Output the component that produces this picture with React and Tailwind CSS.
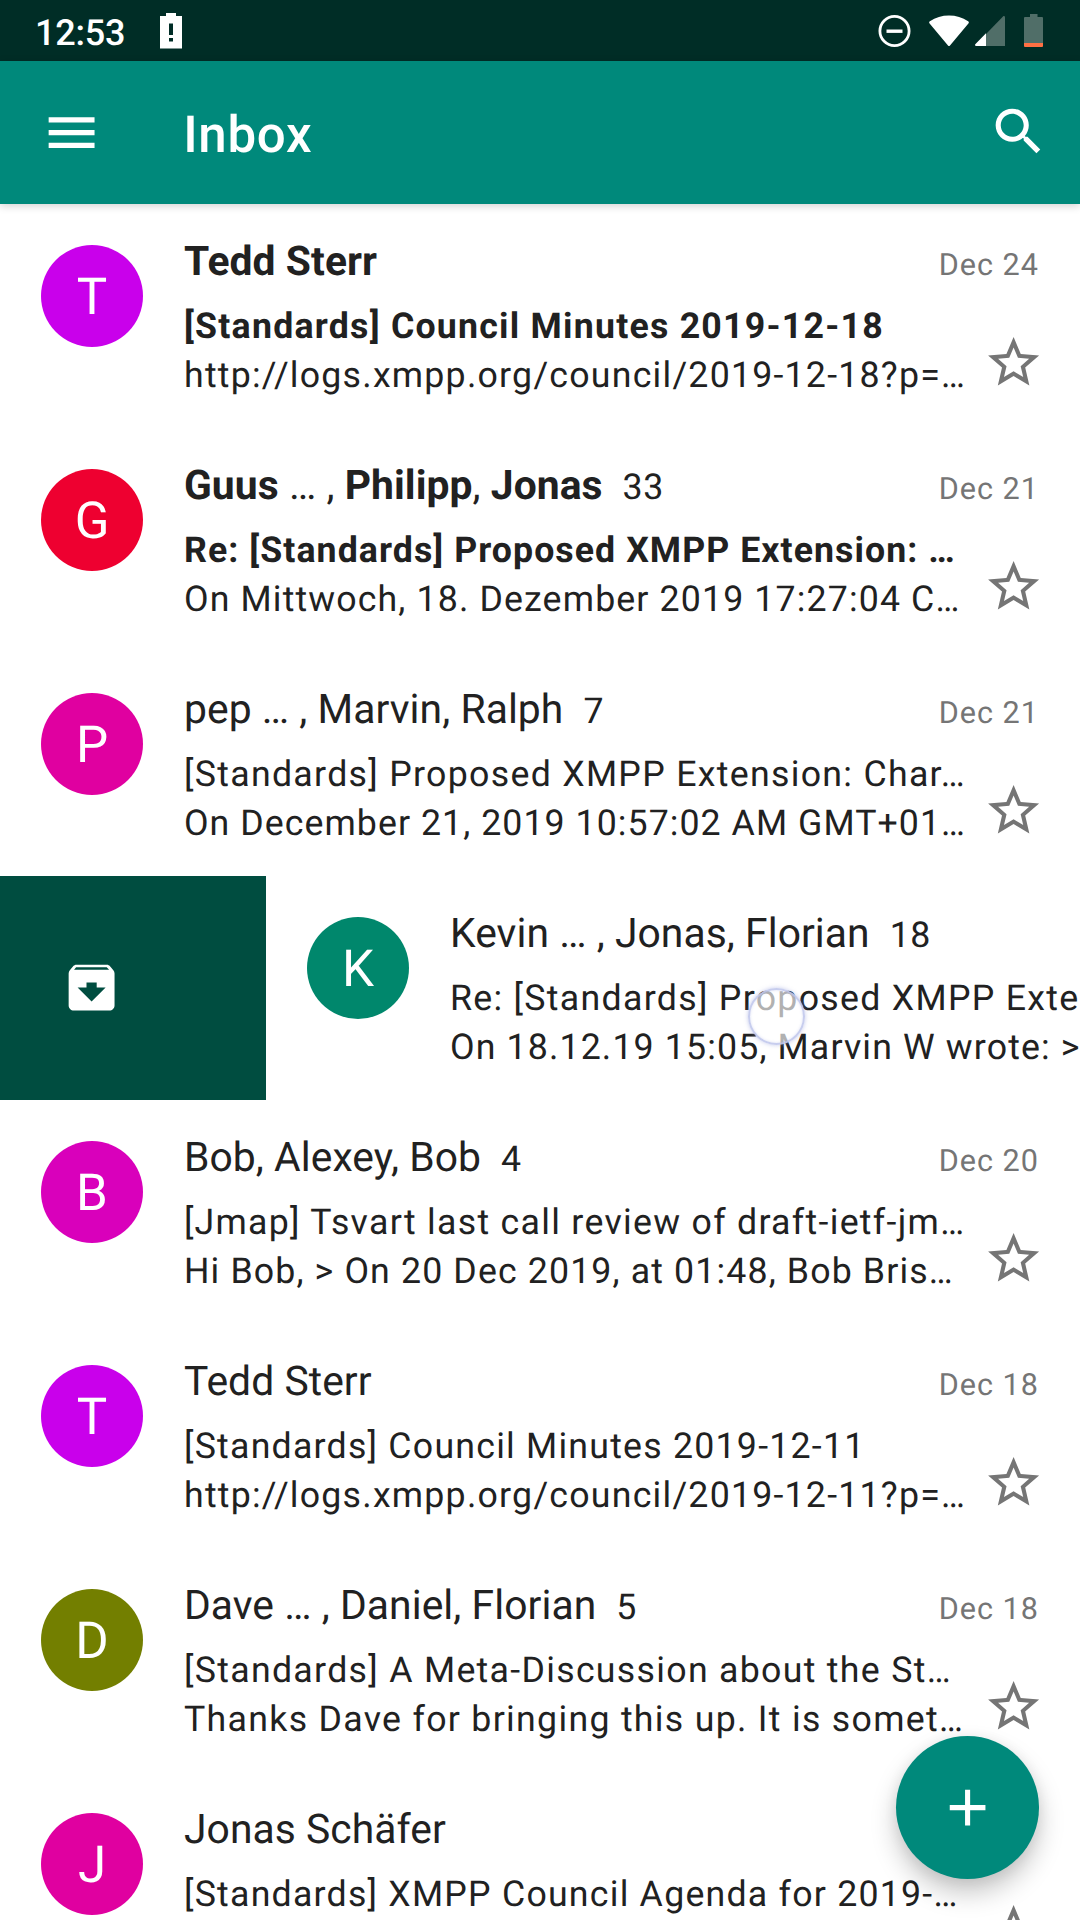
const MENU = 'M3 18h18v-2H3v2zm0-5h18v-2H3v2zm0-7v2h18V6H3z';
const SEARCH =
  'M15.5 14h-.79l-.28-.27C15.41 12.59 16 11.11 16 9.5 16 5.91 13.09 3 9.5 3S3 5.91 3 9.5 5.91 16 9.5 16c1.61 0 3.09-.59 4.23-1.57l.27.28v.79l5 4.99L20.49 19l-4.99-5zm-6 0C7.01 14 5 11.99 5 9.5S7.01 5 9.5 5 14 7.01 14 9.5 11.99 14 9.5 14z';
const STAR =
  'M22 9.24l-7.19-.62L12 2 9.19 8.63 2 9.24l5.46 4.73L5.82 21 12 17.27 18.18 21l-1.63-7.03L22 9.24zM12 15.4l-3.76 2.27 1-4.28-3.32-2.88 4.38-.38L12 6.1l1.71 4.04 4.38.38-3.32 2.88 1 4.28L12 15.4z';
const ARCHIVE =
  'M20.54 5.23l-1.39-1.68C18.88 3.21 18.47 3 18 3H6c-.47 0-.88.21-1.16.55L3.46 5.23C3.17 5.57 3 6.02 3 6.5V19c0 1.1.9 2 2 2h14c1.1 0 2-.9 2-2V6.5c0-.48-.17-.93-.46-1.27zM12 17.5L6.5 12H10v-2h4v2h3.5L12 17.5zM5.12 5l.81-1h12l.94 1H5.12z';
const PLUS = 'M19 13h-6v6h-2v-6H5v-2h6V5h2v6h6v2z';

function Icon({ d, className = '' }) {
  return (
    <svg viewBox="0 0 24 24" fill="currentColor" className={`size-[61.2px] shrink-0 ${className}`}>
      <path d={d} />
    </svg>
  );
}

function StatusBar() {
  return (
    <header className="flex h-[61px] items-center bg-[#002d26] pl-[35px] pr-[37px] text-white">
      <span className="mt-[4px] w-[125px] text-[36px] leading-[56px] font-medium tracking-[-0.2px]">
        12:53
      </span>
      <svg width="22" height="36" viewBox="0 0 22 36" className="shrink-0">
        <path
          fill="#fff"
          fillRule="evenodd"
          d="M6 0h10v3h6v32.500H0V3h6zM9 10.500v11.500h4V10.500zM9 25v3.500h4V25z"
        />
      </svg>
      <div className="ml-auto flex items-center">
        <svg width="34" height="34" viewBox="0 0 34 34" fill="none" stroke="#fff">
          <circle cx="17.500" cy="17" r="14.6" strokeWidth="2.8" />
          <path d="M9.500 17.200h16" strokeWidth="3.400" />
        </svg>
        <svg width="40" height="32" viewBox="0 0 40 32" className="ml-[18px]">
          <path
            fill="#fff"
            d="M.6 8.600C-.1 7.800 0 6.800.9 6.200 6.500 2.500 13 .5 20 .5s13.500 2 19.100 5.700c.9.600 1 1.600.3 2.400L21 30.400c-.6.700-1.400.7-2 0z"
          />
        </svg>
        <svg width="30" height="30" viewBox="0 0 30 30" className="ml-[6px]">
          <path fill="#506e68" d="M30 1.500V30H11V18L28 .5c1-1 2-.3 2 1z" />
          <path fill="#fff" d="M11 17.200V30H1.300C0 30-.5 29 .5 28z" />
        </svg>
        <svg width="19" height="33" viewBox="0 0 19 33" className="ml-[19px]">
          <path fill="#506e68" d="M6 0h7.500v3H18q1 0 1 1v25H0V4q0-1 1-1h5z" />
          <path fill="#ff7043" d="M0 29h19v3q0 1-1 1H1q-1 0-1-1z" />
        </svg>
      </div>
    </header>
  );
}

function AppBar() {
  return (
    <div className="relative z-10 flex h-[143px] items-center bg-[#00897b] pr-[31px] pl-[41px] text-white shadow-[0_2px_8px_rgba(0,0,0,0.18)]">
      <Icon d={MENU} />
      <h1 className="mt-[6px] ml-[81px] text-[51px] leading-[60px] font-medium tracking-[0.7px]">
        Inbox
      </h1>
      <Icon d={SEARCH} className="ml-auto -mt-[2px]" />
    </div>
  );
}

function Avatar({ letter, color }) {
  return (
    <div
      className={`mt-[41px] flex size-[102px] shrink-0 items-center justify-center rounded-full text-[51px] leading-none text-white ${color}`}
    >
      <span className="mt-[3px]">{letter}</span>
    </div>
  );
}

// `tight`, `normal` and `loose` set the letter spacing of a text line.
const SPACING = {
  tight: 'tracking-[1.06px]',
  normal: 'tracking-[1.14px]',
  wide: 'tracking-[1.23px]',
  loose: 'tracking-[1.3px]',
};

function Message({ letter, color, from, count, date, subject, preview, unread, spacing }) {
  return (
    <article className="flex h-[224px] w-[1080px] shrink-0 bg-white pr-[36px] pl-[41px] text-[#212121]">
      <Avatar letter={letter} color={color} />
      <div className="ml-[41px] flex min-w-0 flex-1 flex-col pt-[33px] whitespace-nowrap">
        <div className="flex h-[48px] items-baseline pr-[5px] text-[40.8px] leading-[48px] tracking-[0.06px]">
          <span className="whitespace-pre">{from}</span>
          {count && <span className="ml-[20px] text-[35.7px] tracking-[0.6px]">{count}</span>}
          {date && (
            <span className="ml-auto text-[30.6px] tracking-[1px] text-[#757575]">{date}</span>
          )}
        </div>
        <div className="flex pt-[16px]">
          <div className="mt-px -mb-px min-w-0 flex-1 text-[35.7px] leading-[49px]">
            <p className={`${SPACING[spacing[0]]} ${unread ? 'font-bold' : ''}`}>{subject}</p>
            <p className={SPACING[spacing[1]]}>{preview}</p>
          </div>
          {date && <Icon d={STAR} className="mt-[31px] text-[#757575]" />}
        </div>
      </div>
    </article>
  );
}

const earlier = [
  {
    letter: 'T',
    color: 'bg-[#c900eb]',
    from: <b>Tedd Sterr</b>,
    date: 'Dec 24',
    subject: '[Standards] Council Minutes 2019-12-18',
    preview: 'http://logs.xmpp.org/council/2019-12-18?p=…',
    spacing: ['wide', 'wide'],
    unread: true,
  },
  {
    letter: 'G',
    color: 'bg-[#ee0030]',
    from: (
      <>
        <b>Guus</b> … , <b>Philipp</b>, <b>Jonas</b>
      </>
    ),
    count: '33',
    date: 'Dec 21',
    subject: 'Re: [Standards] Proposed XMPP Extension: …',
    preview: 'On Mittwoch, 18. Dezember 2019 17:27:04 C…',
    spacing: ['tight', 'normal'],
    unread: true,
  },
  {
    letter: 'P',
    color: 'bg-[#e000a0]',
    from: 'pep … , Marvin, Ralph',
    count: '7',
    date: 'Dec 21',
    subject: '[Standards] Proposed XMPP Extension: Char…',
    preview: 'On December 21, 2019 10:57:02 AM GMT+01…',
    spacing: ['loose', 'tight'],
  },
];

const swiped = {
  letter: 'K',
  color: 'bg-[#00876c]',
  from: 'Kevin … , Jonas, Florian',
  count: '18',
  subject: 'Re: [Standards] Proposed XMPP Exte',
  preview: 'On 18.12.19 15:05, Marvin W wrote: >',
  spacing: ['loose', 'normal'],
};

const later = [
  {
    letter: 'B',
    color: 'bg-[#d900bb]',
    from: 'Bob, Alexey, Bob',
    count: '4',
    date: 'Dec 20',
    subject: '[Jmap] Tsvart last call review of draft-ietf-jm…',
    preview: 'Hi Bob, > On 20 Dec 2019, at 01:48, Bob Bris…',
    spacing: ['loose', 'normal'],
  },
  {
    letter: 'T',
    color: 'bg-[#c900eb]',
    from: 'Tedd Sterr',
    date: 'Dec 18',
    subject: '[Standards] Council Minutes 2019-12-11',
    preview: 'http://logs.xmpp.org/council/2019-12-11?p=…',
    spacing: ['wide', 'wide'],
  },
  {
    letter: 'D',
    color: 'bg-[#737f00]',
    from: 'Dave … , Daniel, Florian',
    count: '5',
    date: 'Dec 18',
    subject: '[Standards] A Meta-Discussion about the St…',
    preview: 'Thanks Dave for bringing this up. It is somet…',
    spacing: ['loose', 'loose'],
  },
  {
    letter: 'J',
    color: 'bg-[#e000a0]',
    from: 'Jonas Schäfer',
    date: ' ',
    subject: '[Standards] XMPP Council Agenda for 2019-…',
    preview: '',
    spacing: ['wide', 'wide'],
  },
];

export default function App() {
  return (
    <div className="relative h-[1920px] w-[1080px] overflow-hidden bg-white font-['Roboto',sans-serif] [text-rendering:geometricPrecision]">
      <StatusBar />
      <AppBar />
      <main>
        {earlier.map((m, i) => (
          <Message key={i} {...m} />
        ))}
        <div className="relative flex h-[224px] overflow-hidden">
          <div className="flex w-[266px] shrink-0 items-center bg-[#004d40] pl-[61px] text-white">
            <Icon d={ARCHIVE} />
          </div>
          <Message {...swiped} />
          <span className="absolute top-[112px] left-[748px] size-[57px] rounded-full border-[2px] border-[#b9c0ea]/80 bg-white/65 shadow-[0_0_4px_rgba(140,150,220,0.5),inset_0_0_3px_rgba(140,150,220,0.3)]" />
        </div>
        {later.map((m, i) => (
          <Message key={i} {...m} />
        ))}
      </main>
      <button
        aria-label="Compose"
        className="absolute right-[41px] bottom-[41px] flex size-[143px] items-center justify-center rounded-full bg-[#00897b] text-white shadow-[0_14px_26px_rgba(0,0,0,0.22),0_2px_14px_rgba(0,0,0,0.07)]"
      >
        <Icon d={PLUS} />
      </button>
    </div>
  );
}
